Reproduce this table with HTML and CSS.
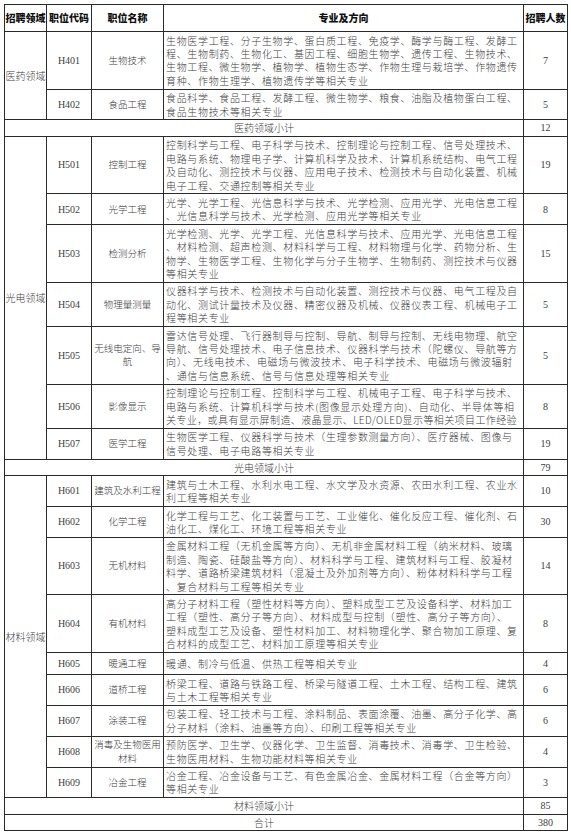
FILE: index.html
```html
<!DOCTYPE html>
<html lang="zh">
<head>
<meta charset="utf-8">
<link rel="stylesheet" href="styles.css">
</head>
<body>
<div class="sheet">
<table class="grid">
<colgroup>
<col class="c-area"><col class="c-code"><col class="c-name"><col class="c-spec"><col class="c-num">
</colgroup>
<thead>
<tr class="head"><th>招聘领域</th><th>职位代码</th><th>职位名称</th><th>专业及方向</th><th>招聘人数</th></tr>
</thead>
<tbody>
<tr>
<td class="area" rowspan="2">医药领域</td><td class="code">H401</td><td class="name">生物技术</td>
<td class="spec">生物医学工程、分子生物学、蛋白质工程、免疫学、酶学与酶工程、发酵工<br>程、生物制药、生物化工、基因工程、细胞生物学、遗传工程、生物技术、<br>生物工程、微生物学、植物学、植物生态学、作物生理与栽培学、作物遗传<br>育种、作物生理学、植物遗传学等相关专业</td><td class="num">7</td>
</tr>
<tr>
<td class="code">H402</td><td class="name">食品工程</td>
<td class="spec">食品科学、食品工程、发酵工程、微生物学、粮食、油脂及植物蛋白工程、<br>食品生物技术等相关专业</td><td class="num">5</td>
</tr>
<tr class="sub"><td class="subname" colspan="4">医药领域小计</td><td class="num">12</td></tr>

<tr>
<td class="area" rowspan="7">光电领域</td><td class="code">H501</td><td class="name">控制工程</td>
<td class="spec">控制科学与工程、电子科学与技术、控制理论与控制工程、信号处理技术、<br>电路与系统、物理电子学、计算机科学及技术、计算机系统结构、电气工程<br>及自动化、测控技术与仪器、应用电子技术、检测技术与自动化装置、机械<br>电子工程、交通控制等相关专业</td><td class="num">19</td>
</tr>
<tr>
<td class="code">H502</td><td class="name">光学工程</td>
<td class="spec">光学、光学工程、光信息科学与技术、光学检测、应用光学、光电信息工程<br>、光信息科学与技术、光学检测、应用光学等相关专业</td><td class="num">8</td>
</tr>
<tr>
<td class="code">H503</td><td class="name">检测分析</td>
<td class="spec">光学检测、光学、光学工程、光信息科学与技术、应用光学、光电信息工程<br>、材料检测、超声检测、材料科学与工程、材料物理与化学、药物分析、生<br>物学、生物医学工程、生物化学与分子生物学、生物制药、测控技术与仪器<br>等相关专业</td><td class="num">15</td>
</tr>
<tr>
<td class="code">H504</td><td class="name">物理量测量</td>
<td class="spec">仪器科学与技术、检测技术与自动化装置、测控技术与仪器、电气工程及自<br>动化、测试计量技术及仪器、精密仪器及机械、仪器仪表工程、机械电子工<br>程等相关专业</td><td class="num">5</td>
</tr>
<tr>
<td class="code">H505</td><td class="name">无线电定向、导<br>航</td>
<td class="spec">雷达信号处理、飞行器制导与控制、导航、制导与控制、无线电物理、航空<br>导航、信号处理技术、电子信息技术、仪器科学与技术（陀螺仪、导航等方<br>向）、无线电技术、电磁场与微波技术、电子科学技术、电磁场与微波辐射<br>、通信与信息系统、信号与信息处理等相关专业</td><td class="num">5</td>
</tr>
<tr>
<td class="code">H506</td><td class="name">影像显示</td>
<td class="spec">控制理论与控制工程、控制科学与工程、机械电子工程、电子科学与技术、<br>电路与系统、计算机科学与技术(图像显示处理方向)、自动化、半导体等相<br><span class="snug">关专业，或具有显示屏制造、液晶显示、LED/OLED显示等相关项目工作经验</span></td><td class="num">8</td>
</tr>
<tr>
<td class="code">H507</td><td class="name">医学工程</td>
<td class="spec">生物医学工程、仪器科学与技术（生理参数测量方向）、医疗器械、图像与<br>信号处理、电子电路等相关专业</td><td class="num">19</td>
</tr>
<tr class="sub"><td class="subname" colspan="4">光电领域小计</td><td class="num">79</td></tr>

<tr>
<td class="area" rowspan="9">材料领域</td><td class="code">H601</td><td class="name">建筑及水利工程</td>
<td class="spec">建筑与土木工程、水利水电工程、水文学及水资源、农田水利工程、农业水<br>利工程等相关专业</td><td class="num">10</td>
</tr>
<tr>
<td class="code">H602</td><td class="name">化学工程</td>
<td class="spec">化学工程与工艺、化工装置与工艺、工业催化、催化反应工程、催化剂、石<br>油化工、煤化工、环境工程等相关专业</td><td class="num">30</td>
</tr>
<tr>
<td class="code">H603</td><td class="name">无机材料</td>
<td class="spec">金属材料工程（无机金属等方向）、无机非金属材料工程（纳米材料、玻璃<br>制造、陶瓷、硅酸盐等方向）、材料科学与工程、建筑材料与工程、胶凝材<br>料学、道路桥梁建筑材料（混凝土及外加剂等方向）、粉体材料科学与工程<br>、复合材料与工程等相关专业</td><td class="num">14</td>
</tr>
<tr>
<td class="code">H604</td><td class="name">有机材料</td>
<td class="spec">高分子材料工程（塑性材料等方向）、塑料成型工艺及设备科学、材料加工<br>工程（塑性、高分子等方向）、材料成型与控制（塑性、高分子等方向）、<br>塑料成型工艺及设备、塑性材料加工、材料物理化学、聚合物加工原理、复<br>合材料的成型工艺、材料加工原理等相关专业</td><td class="num">8</td>
</tr>
<tr class="tall">
<td class="code">H605</td><td class="name">暖通工程</td>
<td class="spec">暖通、制冷与低温、供热工程等相关专业</td><td class="num">4</td>
</tr>
<tr>
<td class="code">H606</td><td class="name">道桥工程</td>
<td class="spec">桥梁工程、道路与铁路工程、桥梁与隧道工程、土木工程、结构工程、建筑<br>与土木工程等相关专业</td><td class="num">6</td>
</tr>
<tr>
<td class="code">H607</td><td class="name">涂装工程</td>
<td class="spec">包装工程、轻工技术与工程、涂料制品、表面涂覆、油墨、高分子化学、高<br>分子材料（涂料、油墨等方向）、印刷工程等相关专业</td><td class="num">6</td>
</tr>
<tr>
<td class="code">H608</td><td class="name">消毒及生物医用<br>材料</td>
<td class="spec">预防医学、卫生学、仪器化学、卫生监督、消毒技术、消毒学、卫生检验、<br>生物医用材料、生物功能材料等相关专业</td><td class="num">4</td>
</tr>
<tr>
<td class="code">H609</td><td class="name">冶金工程</td>
<td class="spec">冶金工程、冶金设备与工艺、有色金属冶金、金属材料工程（合金等方向）<br>等相关专业</td><td class="num">3</td>
</tr>
<tr class="sub"><td class="subname" colspan="4">材料领域小计</td><td class="num">85</td></tr>
<tr class="sub"><td class="subname" colspan="4">合计</td><td class="num">380</td></tr>
</tbody>
</table>
</div>
</body>
</html>
```

FILE: styles.css
```css
html, body {
  margin: 0;
  padding: 0;
  background: #ffffff;
}

.sheet {
  padding: 4px 0 0 4px;
}

.grid {
  border-collapse: collapse;
  table-layout: fixed;
  width: 563px;
  font-family: "Noto Sans CJK SC", sans-serif;
  font-weight: 300;
  font-size: 10px;
  color: #404040;
}

.c-area { width: 42px; }
.c-code { width: 45px; }
.c-name { width: 72px; }
.c-spec { width: 360px; }
.c-num  { width: 44px; }

.grid th,
.grid td {
  border: 1px solid #2a2a2a;
  padding: 1.5px 1px;
  line-height: 13.4px;
  text-align: center;
  vertical-align: middle;
}

.head th {
  height: 26px;
  font-weight: 900;
  font-size: 10px;
  color: #111;
  padding: 0;
  white-space: nowrap;
}

.grid td.spec {
  text-align: left;
  white-space: nowrap;
  padding-left: 2px;
  letter-spacing: 0.66px;
}

.snug {
  letter-spacing: 0.4px;
}

.grid td.code,
.grid td.num {
  font-family: "Liberation Serif", serif;
  font-weight: 400;
  font-size: 10px;
}

.grid td.name,
.grid td.area {
  white-space: nowrap;
  padding: 1.5px 0;
}

.grid td.name {
  font-size: 9.5px;
}

.sub td {
  padding-top: 1px;
  padding-bottom: 1px;
}

.tall td {
  height: 18px;
}
```
